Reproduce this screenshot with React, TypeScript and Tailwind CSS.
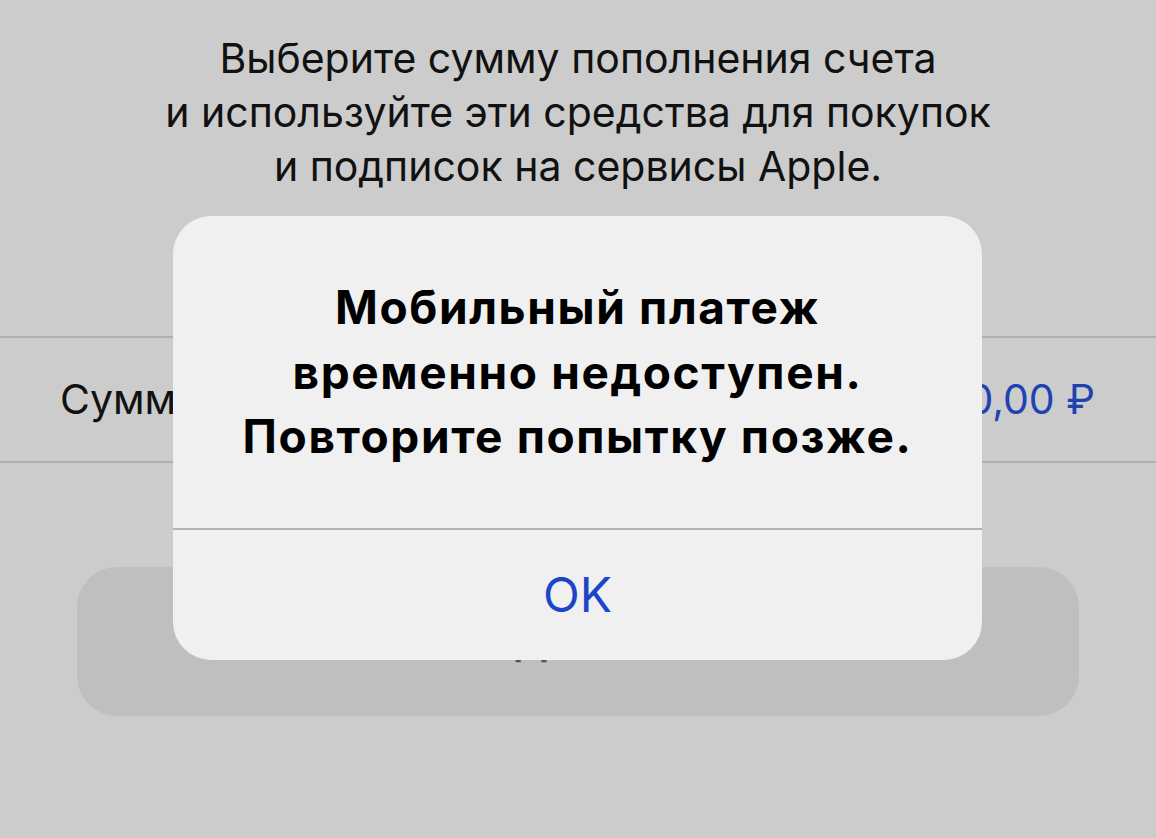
export default function App() {
  return (
    <div
      className="relative h-[838px] w-[1156px] overflow-hidden bg-[#cccccc] text-[#111111]"
      style={{ fontFamily: 'Inter, "Noto Sans", sans-serif' }}
    >
      {/* top description */}
      <div className="pt-[31px] text-center text-[41px] leading-[54px]">
        <p>Выберите сумму пополнения счета</p>
        <p>и используйте эти средства для покупок</p>
        <p>и подписок на сервисы Apple.</p>
      </div>

      {/* amount row */}
      <div className="mt-[143px] flex h-[127px] items-center justify-between border-y-2 border-[#b0b0b0] pl-[60px] pr-[61px] text-[41px]">
        <span>Сумма</span>
        <span className="text-[#2142b3]">1 000,00 ₽</span>
      </div>

      {/* continue button */}
      <div className="mx-[77px] mt-[104px] flex h-[149px] items-center justify-center rounded-[40px] bg-[#bfbfbf]">
        <span className="text-[40px] font-semibold text-[#555555]">Далее</span>
      </div>

      {/* alert */}
      <div className="absolute left-[173px] top-[216px] flex h-[444px] w-[809px] flex-col overflow-hidden rounded-[38px] bg-[#f0f0f0]">
        <div className="pt-[59px] text-center text-[46px] font-bold leading-[64.5px] tracking-[0.035em] text-black">
          <p>Мобильный платеж</p>
          <p>временно недоступен.</p>
          <p>Повторите попытку позже.</p>
        </div>
        <div className="mt-auto flex h-[132px] items-center justify-center border-t-2 border-[#b3b3b3] text-[48px] text-[#1c45c9]">
          OK
        </div>
      </div>
    </div>
  )
}
